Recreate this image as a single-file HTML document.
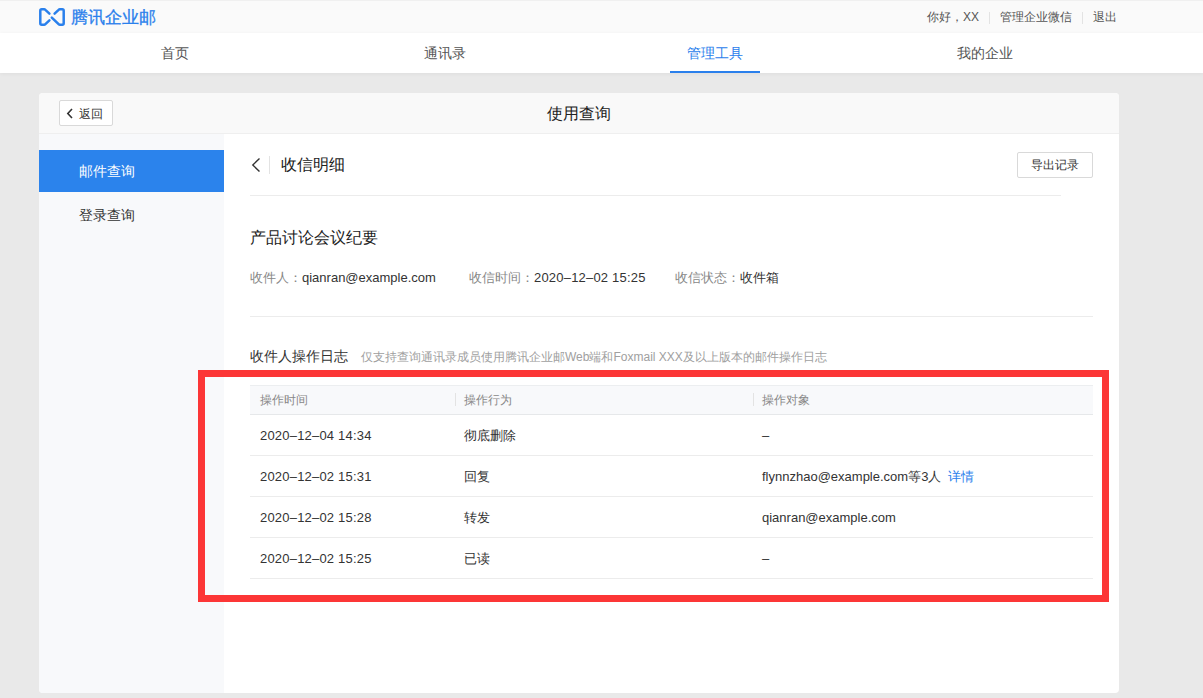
<!DOCTYPE html>
<html><head><meta charset="utf-8">
<style>
*{margin:0;padding:0;box-sizing:border-box;}
html,body{width:1203px;height:698px;overflow:hidden;background:#e9e9e9;font-family:"Liberation Sans",sans-serif;color:#333;}
.abs{position:absolute;white-space:nowrap;}
#top{position:absolute;left:0;top:0;width:1203px;height:33px;background:#fafafa;border-top:1px solid #f0f0f0;}
#nav{position:absolute;left:0;top:33px;width:1203px;height:40px;background:#fff;box-shadow:0 1px 4px rgba(0,0,0,0.05);z-index:2;}
#card{position:absolute;left:39px;top:93px;width:1080px;height:600px;background:#fff;border-radius:4px;overflow:hidden;}
#hdr{position:absolute;left:0;top:0;width:1080px;height:41px;background:#f9f9f9;border-bottom:1px solid #efefef;}
#side{position:absolute;left:0;top:41px;width:185px;height:559px;background:#f8f9fb;}
.btn{position:absolute;background:#fff;border:1px solid #d9d9d9;border-radius:2px;}
.line{position:absolute;height:1px;background:#ececec;}
.red{position:absolute;border:7px solid #fc3636;}
</style></head>
<body>
<div id="top">
  <svg class="abs" style="left:39px;top:7px" width="26" height="18" viewBox="0 0 26 18">
    <g fill="none" stroke="#2a80ec" stroke-width="2.5" stroke-linecap="round" stroke-linejoin="round">
      <path d="M10.4 5.6 L6.4 1.8 Q5.9 1.3 5.1 1.3 L2.7 1.3 Q1.3 1.3 1.3 2.7 L1.3 15.3 Q1.3 16.7 2.7 16.7 L5.1 16.7 Q5.9 16.7 6.4 16.2 L10.4 12.4"/>
      <path d="M15.6 5.6 L19.6 1.8 Q20.1 1.3 20.9 1.3 L23.3 1.3 Q24.7 1.3 24.7 2.7 L24.7 15.3 Q24.7 16.7 23.3 16.7 L20.9 16.7 Q20.1 16.7 19.6 16.2 L12.8 9.6"/>
    </g>
  </svg>
  <div class="abs" style="left:71px;top:7px;font-size:17px;line-height:20px;color:#2a80ec;-webkit-text-stroke:0.3px #2a80ec;">腾讯企业邮</div>
  <div class="abs" style="left:927px;top:9px;font-size:12px;line-height:14px;color:#555;">你好，XX</div>
  <div class="abs" style="left:989px;top:11px;width:1px;height:12px;background:#e3e3e3;"></div>
  <div class="abs" style="left:1000px;top:9px;font-size:12px;line-height:14px;color:#555;">管理企业微信</div>
  <div class="abs" style="left:1082px;top:11px;width:1px;height:12px;background:#e3e3e3;"></div>
  <div class="abs" style="left:1093px;top:9px;font-size:12px;line-height:14px;color:#555;">退出</div>
</div>
<div id="nav">
  <div class="abs" style="left:40px;top:12px;width:270px;text-align:center;font-size:14px;line-height:16px;color:#555;">首页</div>
  <div class="abs" style="left:310px;top:12px;width:270px;text-align:center;font-size:14px;line-height:16px;color:#555;">通讯录</div>
  <div class="abs" style="left:580px;top:12px;width:270px;text-align:center;font-size:14px;line-height:16px;color:#2a80ec;">管理工具</div>
  <div class="abs" style="left:670px;top:38px;width:90px;height:2px;background:#2a80ec;"></div>
  <div class="abs" style="left:850px;top:12px;width:270px;text-align:center;font-size:14px;line-height:16px;color:#555;">我的企业</div>
</div>
<div id="card">
  <div id="hdr">
    <div class="btn" style="left:20px;top:7px;width:54px;height:26px;">
      <svg class="abs" style="left:6px;top:6.5px" width="8" height="11" viewBox="0 0 8 11"><path d="M6 1 L1.8 5.5 L6 10" fill="none" stroke="#333" stroke-width="1.6"/></svg>
      <div class="abs" style="left:19px;top:5.5px;font-size:12px;line-height:14px;color:#333;">返回</div>
    </div>
    <div class="abs" style="left:0;top:12px;width:1080px;text-align:center;font-size:16px;line-height:18px;color:#222;">使用查询</div>
  </div>
  <div id="side">
    <div class="abs" style="left:0;top:16px;width:185px;height:42px;background:#2b83ec;"></div>
    <div class="abs" style="left:40px;top:29px;font-size:14px;line-height:16px;color:#fff;">邮件查询</div>
    <div class="abs" style="left:40px;top:73px;font-size:14px;line-height:16px;color:#333;">登录查询</div>
  </div>
</div>
<!-- content (page coords) -->
<svg class="abs" style="left:251px;top:157px" width="10" height="16" viewBox="0 0 10 16"><path d="M8.5 1.5 L1.8 8 L8.5 14.5" fill="none" stroke="#333" stroke-width="1.4"/></svg>
<div class="abs" style="left:269px;top:156px;width:1px;height:18px;background:#e3e3e3;"></div>
<div class="abs" style="left:281px;top:156px;font-size:16px;line-height:18px;color:#222;">收信明细</div>
<div class="btn" style="left:1017px;top:152px;width:76px;height:26px;">
  <div class="abs" style="left:0;top:5px;width:74px;text-align:center;font-size:12px;line-height:14px;color:#333;">导出记录</div>
</div>
<div class="line" style="left:250px;top:195px;width:811px;"></div>
<div class="abs" style="left:250px;top:229px;font-size:16px;line-height:18px;color:#222;">产品讨论会议纪要</div>
<div class="abs" style="left:250px;top:270px;font-size:13px;line-height:16px;color:#888;">收件人：<span style="color:#333;margin-left:0px">qianran@example.com</span></div>
<div class="abs" style="left:469px;top:270px;font-size:13px;line-height:16px;color:#888;">收信时间：<span style="color:#333;letter-spacing:0.2px">2020–12–02 15:25</span></div>
<div class="abs" style="left:675px;top:270px;font-size:13px;line-height:16px;color:#888;">收信状态：<span style="color:#333">收件箱</span></div>
<div class="line" style="left:250px;top:316px;width:843px;"></div>
<div class="abs" style="left:250px;top:348px;font-size:14px;line-height:16px;color:#333;">收件人操作日志</div>
<div class="abs" style="left:361px;top:350px;font-size:12px;line-height:14px;color:#a0a0a0;">仅支持查询通讯录成员使用腾讯企业邮Web端和Foxmail XXX及以上版本的邮件操作日志</div>
<!-- table -->
<div class="abs" style="left:250px;top:385px;width:843px;height:30px;background:#f8f9fb;border-top:1px solid #eceef0;border-bottom:1px solid #e6e8ea;"></div>
<div class="abs" style="left:260px;top:393px;font-size:12px;line-height:14px;color:#888;">操作时间</div>
<div class="abs" style="left:455px;top:393px;width:1px;height:13px;background:#e3e3e3;"></div>
<div class="abs" style="left:464px;top:393px;font-size:12px;line-height:14px;color:#888;">操作行为</div>
<div class="abs" style="left:753px;top:393px;width:1px;height:13px;background:#e3e3e3;"></div>
<div class="abs" style="left:762px;top:393px;font-size:12px;line-height:14px;color:#888;">操作对象</div>

<div class="abs" style="left:260px;top:428px;font-size:13px;line-height:16px;color:#333;letter-spacing:0.2px;">2020–12–04 14:34</div>
<div class="abs" style="left:464px;top:428px;font-size:13px;line-height:16px;color:#333;">彻底删除</div>
<div class="abs" style="left:762px;top:428px;font-size:13px;line-height:16px;color:#333;">–</div>
<div class="line" style="left:250px;top:455px;width:843px;"></div>

<div class="abs" style="left:260px;top:469px;font-size:13px;line-height:16px;color:#333;letter-spacing:0.2px;">2020–12–02 15:31</div>
<div class="abs" style="left:464px;top:469px;font-size:13px;line-height:16px;color:#333;">回复</div>
<div class="abs" style="left:762px;top:469px;font-size:13px;line-height:16px;color:#333;">flynnzhao@example.com等3人 <span style="color:#2a80ec;margin-left:3px">详情</span></div>
<div class="line" style="left:250px;top:496px;width:843px;"></div>

<div class="abs" style="left:260px;top:510px;font-size:13px;line-height:16px;color:#333;letter-spacing:0.2px;">2020–12–02 15:28</div>
<div class="abs" style="left:464px;top:510px;font-size:13px;line-height:16px;color:#333;">转发</div>
<div class="abs" style="left:762px;top:510px;font-size:13px;line-height:16px;color:#333;">qianran@example.com</div>
<div class="line" style="left:250px;top:537px;width:843px;"></div>

<div class="abs" style="left:260px;top:551px;font-size:13px;line-height:16px;color:#333;letter-spacing:0.2px;">2020–12–02 15:25</div>
<div class="abs" style="left:464px;top:551px;font-size:13px;line-height:16px;color:#333;">已读</div>
<div class="abs" style="left:762px;top:551px;font-size:13px;line-height:16px;color:#333;">–</div>
<div class="line" style="left:250px;top:578px;width:843px;"></div>

<div class="red" style="left:198px;top:370px;width:911px;height:232px;"></div>
</body></html>
